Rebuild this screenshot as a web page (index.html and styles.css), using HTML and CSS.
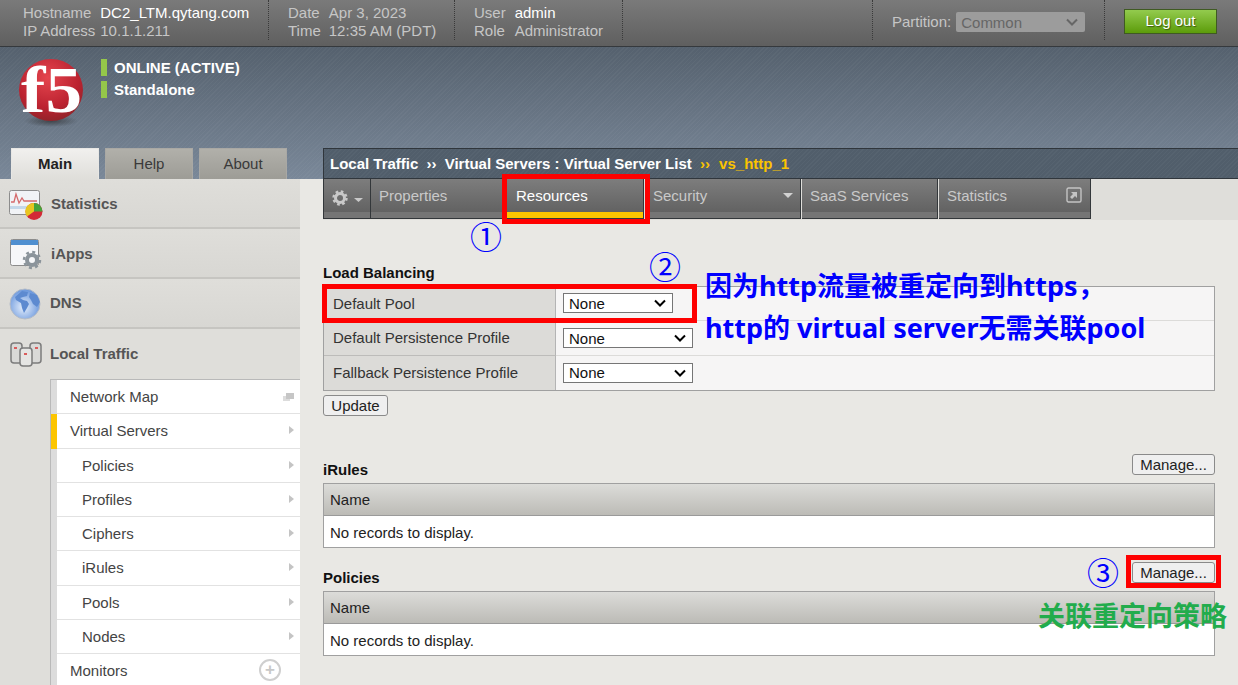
FILE: index.html
```html
<!DOCTYPE html>
<html lang="en">
<head>
  <meta charset="UTF-8">
  <title>Virtual Server List</title>
  <link rel="stylesheet" href="styles.css">
</head>
<body>
<div class="page">

  <div class="topbar">
    <div class="info info-host">
      <span>Hostname</span><b>DC2_LTM.qytang.com</b>
      <span>IP Address</span><span>10.1.1.211</span>
    </div>
    <div class="info info-date">
      <span>Date</span><span>Apr 3, 2023</span>
      <span>Time</span><span>12:35 AM (PDT)</span>
    </div>
    <div class="info info-user">
      <span>User</span><b>admin</b>
      <span>Role</span><span>Administrator</span>
    </div>
    <div class="partition">
      <label>Partition:</label>
      <select disabled><option>Common</option></select>
    </div>
    <div class="logout"><button>Log out</button></div>
  </div>

  <div class="banner">
    <div class="brand">
      <svg class="logo" width="68" height="80" viewBox="0 -8 68 80">
        <defs>
          <radialGradient id="ball" cx="45%" cy="30%" r="75%">
            <stop offset="0" stop-color="#e5454e"/>
            <stop offset="0.65" stop-color="#bb2230"/>
            <stop offset="1" stop-color="#8a2428"/>
          </radialGradient>
          <radialGradient id="shade" cx="50%" cy="50%" r="50%">
            <stop offset="0" stop-color="#222" stop-opacity="0.6"/>
            <stop offset="1" stop-color="#222" stop-opacity="0"/>
          </radialGradient>
        </defs>
        <ellipse cx="34" cy="64" rx="27" ry="6" fill="url(#shade)"/>
        <ellipse cx="34" cy="33" rx="32" ry="31" fill="url(#ball)"/>
        <text class="logo-text" x="4" y="55" textLength="61" lengthAdjust="spacingAndGlyphs">f5</text>
      </svg>
      <div class="status">
        <div class="status-line">ONLINE (ACTIVE)</div>
        <div class="status-line">Standalone</div>
      </div>
    </div>
    <div class="navrow">
      <div class="tabs">
        <div class="tab tab-on">Main</div>
        <div class="tab">Help</div>
        <div class="tab">About</div>
      </div>
      <div class="crumbs">Local Traffic <i>››</i> Virtual Servers : Virtual Server List <em>››</em> <em class="crumb-last">vs_http_1</em></div>
    </div>
  </div>

  <div class="main">
    <aside class="side">
      <div class="side-item">
        <svg width="44" height="40" viewBox="0 0 44 40">
          <rect x="2.500" y="7.500" width="30" height="24" rx="2" fill="#f1f3f6" stroke="#8c8c8c"/>
          <rect x="3" y="23" width="29" height="3" fill="#c4d8ea"/>
          <path d="M4 19h3l2-8 3 9 3-5 2 3h13" fill="none" stroke="#d56a6c" stroke-width="1.300"/>
          <circle cx="27" cy="28.500" r="8.500" fill="#d32a36"/>
          <path d="M27 28.500V20A8.500 8.500 0 0 1 35.500 28.500Z" fill="#45a33b"/>
          <path d="M27 28.500V20A8.500 8.500 0 0 0 20 33.500Z" fill="#e8c620"/>
        </svg>
        <span>Statistics</span>
      </div>
      <div class="side-item">
        <svg width="44" height="40" viewBox="0 0 44 40">
          <rect x="3.500" y="6.500" width="28" height="26" rx="2" fill="#f6f7f9" stroke="#8c8c8c"/>
          <rect x="4" y="7" width="27" height="5" fill="#4f8fd0"/>
          <circle cx="25" cy="27" r="5" fill="none" stroke="#8b949b" stroke-width="4"/>
          <circle cx="25" cy="27" r="8" fill="none" stroke="#8b949b" stroke-width="2.500" stroke-dasharray="3 3.280"/>
        </svg>
        <span>iApps</span>
      </div>
      <div class="side-item side-nudge">
        <svg width="44" height="40" viewBox="0 0 44 40">
          <defs>
            <radialGradient id="globe" cx="45%" cy="60%" r="65%">
              <stop offset="0" stop-color="#e6effc"/>
              <stop offset="1" stop-color="#5b8cd8"/>
            </radialGradient>
          </defs>
          <circle cx="18" cy="21" r="15" fill="url(#globe)" stroke="#b4bcc8"/>
          <path d="M8 14l7-6 6 1-1 4-4 1-3 1 3 2 4 1 2 3-2 4-3 5-2-5-1-5-5-3Z" fill="#5d8ad0"/>
          <path d="M23 10l7 2 3 7-3 5-4-3-2-4-2-3Z" fill="#5d8ad0"/>
        </svg>
        <span>DNS</span>
      </div>
      <div class="side-item side-open side-nudge">
        <svg width="44" height="40" viewBox="0 0 44 40">
          <rect x="4" y="9" width="11" height="20" rx="3" fill="#d9d9d7" stroke="#7c7c7c" stroke-width="1.500"/>
          <rect x="23" y="9" width="11" height="20" rx="3" fill="#d9d9d7" stroke="#7c7c7c" stroke-width="1.500"/>
          <rect x="13" y="14" width="12" height="18" rx="3" fill="#e5e5e3" stroke="#7c7c7c" stroke-width="1.500"/>
          <rect x="7" y="13" width="3" height="2" fill="#d95c5c"/>
          <rect x="28" y="13" width="3" height="2" fill="#d95c5c"/>
          <rect x="17" y="19" width="3" height="2" fill="#d95c5c"/>
        </svg>
        <span>Local Traffic</span>
      </div>
      <ul class="submenu">
        <li>Network Map
          <svg class="mapicon" width="11" height="9" viewBox="0 0 11 9">
            <rect x="0" y="3" width="7" height="5" fill="#dcdcdc"/>
            <rect x="3" y="0" width="8" height="6" fill="#c6c6c6"/>
          </svg>
        </li>
        <li class="sub-on has-arrow">Virtual Servers</li>
        <li class="sub-child has-arrow">Policies</li>
        <li class="sub-child has-arrow">Profiles</li>
        <li class="sub-child has-arrow">Ciphers</li>
        <li class="sub-child has-arrow">iRules</li>
        <li class="sub-child has-arrow">Pools</li>
        <li class="sub-child has-arrow">Nodes</li>
        <li>Monitors <span class="plus">+</span></li>
      </ul>
    </aside>

    <section class="content">
      <div class="strip">
        <div class="strip-tab strip-gear">
          <svg width="32" height="16" viewBox="0 0 32 16">
            <circle cx="8" cy="8" r="4.500" fill="none" stroke="#c9c9c9" stroke-width="3"/>
            <circle cx="8" cy="8" r="6.500" fill="none" stroke="#c9c9c9" stroke-width="2.400" stroke-dasharray="2.600 2.500"/>
            <path d="M22 8h9l-4.500 4Z" fill="#c9c9c9"/>
          </svg>
        </div>
        <div class="strip-tab w-properties">Properties</div>
        <div class="strip-tab strip-on w-resources">Resources</div>
        <div class="strip-tab w-security">Security<span class="caret"></span></div>
        <div class="strip-tab w-saas">SaaS Services</div>
        <div class="strip-tab w-stats">Statistics
          <svg class="ext" width="16" height="16" viewBox="0 0 16 16">
            <rect x="1" y="1" width="14" height="14" rx="1.500" fill="none" stroke="#c4c4c4" stroke-width="1.400"/>
            <path d="M5 5h6v6l-2-2-3 3-2-2 3-3Z" fill="#c4c4c4"/>
          </svg>
        </div>
      </div>

      <div class="body">
        <div class="sec-head"><h3>Load Balancing</h3></div>
        <div class="props">
          <div class="prop">
            <div class="prop-name">Default Pool</div>
            <div class="prop-val"><select class="sel-short"><option>None</option></select></div>
          </div>
          <div class="prop">
            <div class="prop-name">Default Persistence Profile</div>
            <div class="prop-val"><select class="sel-long"><option>None</option></select></div>
          </div>
          <div class="prop">
            <div class="prop-name">Fallback Persistence Profile</div>
            <div class="prop-val"><select class="sel-long"><option>None</option></select></div>
          </div>
        </div>
        <button class="btn btn-update">Update</button>

        <div class="sec-head sec-far"><h3>iRules</h3><button class="btn btn-manage">Manage...</button></div>
        <div class="list">
          <div class="list-head">Name</div>
          <div class="list-row">No records to display.</div>
        </div>

        <div class="sec-head sec-near"><h3>Policies</h3><button class="btn btn-manage">Manage...</button></div>
        <div class="list">
          <div class="list-head">Name</div>
          <div class="list-row">No records to display.</div>
        </div>
      </div>
    </section>
  </div>

  <!-- annotations drawn on top of the screenshot -->
  <div class="mark mark-resources"></div>
  <div class="mark mark-pool"></div>
  <div class="mark mark-manage"></div>
  <div class="num num-1">①</div>
  <div class="num num-2">②</div>
  <div class="num num-3">③</div>
  <div class="note note-blue">因为http流量被重定向到https，<br>http的 virtual server无需关联pool</div>
  <div class="note note-green">关联重定向策略</div>

</div>
</body>
</html>
```

FILE: styles.css
```css
html, body {
  margin: 0;
  padding: 0;
}

body {
  font-family: "Liberation Sans", Arial, sans-serif;
  font-size: 15px;
  color: #222;
  background-color: #e9e8e4;
}

.page {
  position: relative;
  width: 1238px;
  height: 685px;
  overflow: hidden;
}

/* top info bar */
.topbar {
  display: flex;
  height: 46px;
  background: linear-gradient(#7a7a7a, #5f5f5f);
  border-bottom: 1px solid #35393d;
  color: #c6c6c6;
}

.info {
  display: grid;
  grid-template-columns: auto auto;
  justify-content: start;
  align-content: start;
  grid-auto-rows: 18px;
  padding-top: 4px;
  line-height: 18px;
  border-right: 1px dotted #3a3a3a;
  height: 36px;
  white-space: nowrap;
}

.info b {
  font-weight: normal;
  color: #fff;
}

.info-host {
  width: 245px;
  padding-left: 23px;
  column-gap: 5px;
}

.info-date {
  width: 166px;
  padding-left: 19px;
  column-gap: 8px;
}

.info-user {
  width: 148px;
  padding-left: 19px;
  column-gap: 9px;
}

.partition {
  margin-left: 249px;
  width: 212px;
  padding: 4px 0 0 19px;
  height: 36px;
  display: flex;
  align-items: flex-start;
  gap: 5px;
  border-left: 1px dotted #3a3a3a;
  border-right: 1px dotted #3a3a3a;
  line-height: 36px;
}

.partition select {
  appearance: none;
  width: 129px;
  height: 20px;
  margin-top: 8px;
  padding-left: 5px;
  font: 15px "Liberation Sans", Arial, sans-serif;
  color: #666;
  background: #9c9c9c url("data:image/svg+xml;utf8,<svg xmlns='http://www.w3.org/2000/svg' width='12' height='8'><path d='M1 1.500l5 5 5-5' fill='none' stroke='%23666' stroke-width='2'/></svg>") no-repeat right 7px center;
  border: 0;
  border-radius: 2px;
  opacity: 1;
}

.logout {
  padding: 9px 0 0 19px;
}

.logout button {
  width: 93px;
  height: 25px;
  padding: 0 0 2px;
  font: 15px "Liberation Sans", Arial, sans-serif;
  color: #fff;
  text-shadow: 1px 1px 1px #3c5a10;
  background: linear-gradient(#93cb4e, #5c9c0a);
  border: 1px solid #3f5a22;
}

/* banner with logo, tabs and breadcrumb */
.banner {
  display: flex;
  flex-direction: column;
  justify-content: space-between;
  height: 132px;
  background:
    repeating-linear-gradient(135deg, rgba(255,255,255,0.03) 0 1px, transparent 1px 3px),
    linear-gradient(#55616e, #7a8899);
}

.brand {
  display: flex;
  padding: 2px 0 0 17px;
}

.logo-text {
  font-family: "Liberation Serif", serif;
  font-size: 66px;
  font-weight: bold;
  fill: #fff;
}

.status {
  margin: 10px 0 0 16px;
  color: #fff;
  font-weight: bold;
}

.status-line {
  height: 17px;
  line-height: 17px;
  margin-bottom: 5px;
  padding-left: 7px;
  border-left: 6px solid #95c74a;
}

.navrow {
  display: flex;
}

.tabs {
  display: flex;
  gap: 6px;
  width: 300px;
  padding-left: 11px;
  margin-right: 23px;
  box-sizing: border-box;
}

.tab {
  width: 88px;
  height: 31px;
  line-height: 29px;
  box-sizing: border-box;
  text-align: center;
  color: #3a3a3a;
  background: linear-gradient(#b1b0aa, #9d9c96);
  border: 1px solid #a9a8a4;
  border-bottom: 0;
}

.tab-on {
  color: #222;
  font-weight: bold;
  background: linear-gradient(#f1f0ee, #dfdeda);
  border-color: #e8e7e4;
}

.crumbs {
  flex: 1;
  height: 31px;
  line-height: 30px;
  box-sizing: border-box;
  padding-left: 6px;
  color: #fff;
  font-weight: bold;
  white-space: pre-wrap;
  background:
    repeating-linear-gradient(135deg, rgba(255,255,255,0.03) 0 1px, transparent 1px 3px),
    #515e6b;
  border-top: 1px solid #30363c;
  border-left: 1px solid #30363c;
  border-bottom: 1px solid #30363c;
}

.crumbs i {
  font-style: normal;
  margin: 0 4px;
}

.crumbs em {
  font-style: normal;
  color: #fbc400;
  margin-left: 4px;
}

.crumbs .crumb-last {
  margin-left: 5px;
}

/* left menu */
.main {
  display: flex;
  height: 506px;
}

.side {
  width: 300px;
  flex: none;
  background-color: #dfdeda;
}

.side-item {
  display: flex;
  align-items: center;
  height: 50px;
  box-sizing: border-box;
  padding-left: 7px;
  font-weight: bold;
  color: #555;
  background: linear-gradient(#dfdeda, #d8d7d3);
  border-bottom: 2px solid #c6c5c1;
}

.side-nudge span {
  margin: -2px 0 0 -1px;
}

.side-open {
  background: #dfdeda;
  border-bottom: 0;
}

.submenu {
  list-style: none;
  margin: 0 0 0 50px;
  padding: 0;
  border-top: 1px solid #b9b9b9;
  border-left: 1px solid #b9b9b9;
  background-color: #dcdcdc;
}

.submenu li {
  position: relative;
  height: 34.250px;
  line-height: 33.500px;
  box-sizing: border-box;
  margin-left: 6px;
  padding-left: 13px;
  color: #444;
  background-color: #fff;
  border-bottom: 1px solid #e2e2e2;
}

.submenu .sub-child {
  padding-left: 25px;
}

.submenu .sub-on {
  box-shadow: -6px 0 0 #fcc500;
}

.has-arrow::after {
  content: "";
  position: absolute;
  right: 6px;
  top: 12px;
  border-left: 5px solid #c4c4c4;
  border-top: 4.500px solid transparent;
  border-bottom: 4.500px solid transparent;
}

.mapicon {
  position: absolute;
  right: 6px;
  top: 13px;
}

.plus {
  position: absolute;
  right: 19px;
  top: 5px;
  width: 18px;
  height: 18px;
  line-height: 17px;
  text-align: center;
  font-size: 17px;
  font-weight: bold;
  color: #c8c8c8;
  border: 2px solid #cfcfcf;
  border-radius: 50%;
}

/* right side */
.content {
  flex: 1;
  padding-left: 23px;
}

.strip {
  display: flex;
  height: 41px;
  box-sizing: border-box;
  background-color: #dfdeda;
}

.strip-tab {
  position: relative;
  box-sizing: border-box;
  height: 40px;
  padding: 8px 0 0 8px;
  line-height: 18px;
  color: #c9c9c9;
  background: linear-gradient(#7d7d7d 0, #626262 33px, #757575 33px);
  border-right: 1px solid #33373a;
  border-bottom: 1px solid #33373a;
  margin-right: 1px;
}

.strip-gear {
  width: 48px;
  padding: 11px 0 0 8px;
  margin-right: 0;
  border-left: 1px solid #33373a;
}

.w-properties {
  width: 135px;
}

.w-resources {
  width: 137px;
  padding-left: 9px;
}

.w-security {
  width: 156px;
}

.w-saas {
  width: 136px;
}

.w-stats {
  width: 152px;
  margin-right: 0;
}

.strip-on {
  color: #fff;
  background: linear-gradient(#7d7d7d 0, #626262 33px, #fcc500 33px);
}

.caret {
  position: absolute;
  right: 7px;
  top: 14px;
  border-top: 5px solid #d2d2d2;
  border-left: 5px solid transparent;
  border-right: 5px solid transparent;
}

.ext {
  position: absolute;
  right: 8px;
  top: 8px;
}

.body {
  width: 892px;
  padding-top: 37px;
}

.sec-head {
  display: flex;
  justify-content: space-between;
  align-items: flex-start;
  height: 22px;
  margin-bottom: 7px;
}

.sec-far {
  margin-top: 38px;
}

.sec-near {
  margin-top: 14px;
}

h3 {
  margin: 8px 0 0;
  font-size: 15px;
  line-height: 16px;
  font-weight: bold;
  color: #111;
}

.props {
  border: 1px solid #a0a0a0;
  background-color: #f6f5f5;
}

.prop {
  display: flex;
  height: 34.333px;
  box-sizing: border-box;
  border-bottom: 1px solid #dcdbd9;
}

.prop:last-child {
  border-bottom: 0;
}

.prop-name {
  width: 232px;
  box-sizing: border-box;
  padding-left: 9px;
  line-height: 33px;
  color: #333;
  background-color: #dcdbd8;
  border-right: 1px solid #b4b4b4;
}

.prop:not(:last-child) .prop-name {
  border-bottom: 1px solid #bdbcba;
  height: 34.333px;
}

.prop-val {
  padding: 7px 0 0 7px;
}

.prop:first-child .prop-val {
  padding-top: 6px;
}

.prop-val select {
  appearance: none;
  height: 20px;
  padding-left: 5px;
  font: 15px "Liberation Sans", Arial, sans-serif;
  color: #111;
  background: #fff url("data:image/svg+xml;utf8,<svg xmlns='http://www.w3.org/2000/svg' width='12' height='8'><path d='M1 1.500l5 5 5-5' fill='none' stroke='%23000' stroke-width='2'/></svg>") no-repeat right 6px center;
  border: 1px solid #767676;
  border-radius: 0;
}

.sel-short {
  width: 110px;
}

.sel-long {
  width: 130px;
}

.btn {
  height: 21px;
  padding: 0;
  font: 15px "Liberation Sans", Arial, sans-serif;
  color: #222;
  background-color: #efefef;
  border: 1px solid #8a8a8a;
  border-radius: 3px;
}

.btn-update {
  display: block;
  width: 65px;
  margin-top: 4px;
}

.btn-manage {
  width: 83px;
}

.list {
  border: 1px solid #a0a0a0;
  background-color: #fff;
}

.list-head {
  height: 32px;
  line-height: 31px;
  box-sizing: border-box;
  padding-left: 6px;
  color: #222;
  background: linear-gradient(#dcdcd9, #bcbbb6);
  border-bottom: 1px solid #9a9a9a;
}

.list-row {
  height: 31px;
  line-height: 33px;
  padding-left: 6px;
  color: #222;
}

/* annotations */
.mark {
  position: absolute;
  box-sizing: border-box;
  border: 5px solid #fe0000;
}

.mark-resources {
  left: 502px;
  top: 174px;
  width: 148px;
  height: 50px;
}

.mark-pool {
  left: 322px;
  top: 284px;
  width: 375px;
  height: 39px;
}

.mark-manage {
  left: 1126px;
  top: 555px;
  width: 95px;
  height: 33px;
}

.num {
  position: absolute;
  font-family: "Noto Sans CJK SC", sans-serif;
  font-size: 32px;
  line-height: 32px;
  color: #0000fe;
}

.num-1 {
  left: 470px;
  top: 219px;
}

.num-2 {
  left: 649px;
  top: 249px;
}

.num-3 {
  left: 1087px;
  top: 555px;
}

.note {
  position: absolute;
  font-family: "Noto Sans", "Noto Sans CJK SC", sans-serif;
  font-weight: bold;
  white-space: nowrap;
}

.note-blue {
  left: 705px;
  top: 265px;
  font-size: 27px;
  line-height: 42px;
  color: #0000fe;
}

.note-green {
  left: 1038px;
  top: 598px;
  font-size: 27px;
  line-height: 36px;
  color: #22ac4c;
}
```
